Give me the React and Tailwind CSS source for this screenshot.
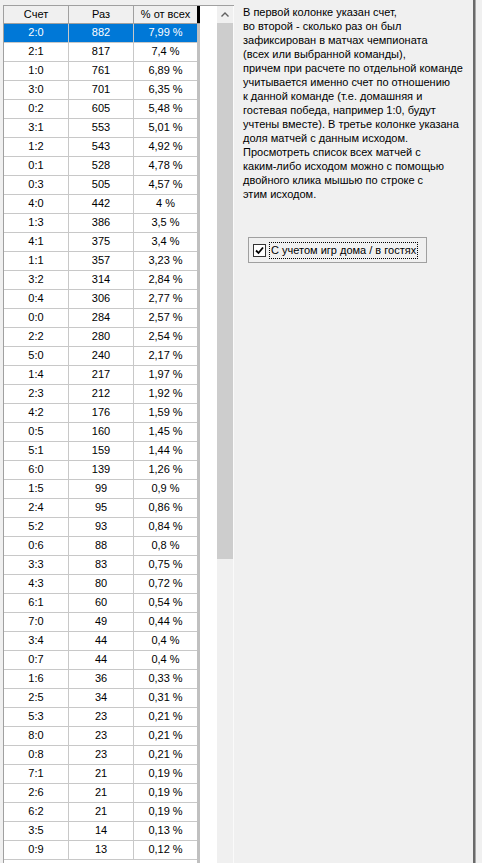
import React from "react";

const rows = [
  ["2:0", "882", "7,99 %"],
  ["2:1", "817", "7,4 %"],
  ["1:0", "761", "6,89 %"],
  ["3:0", "701", "6,35 %"],
  ["0:2", "605", "5,48 %"],
  ["3:1", "553", "5,01 %"],
  ["1:2", "543", "4,92 %"],
  ["0:1", "528", "4,78 %"],
  ["0:3", "505", "4,57 %"],
  ["4:0", "442", "4 %"],
  ["1:3", "386", "3,5 %"],
  ["4:1", "375", "3,4 %"],
  ["1:1", "357", "3,23 %"],
  ["3:2", "314", "2,84 %"],
  ["0:4", "306", "2,77 %"],
  ["0:0", "284", "2,57 %"],
  ["2:2", "280", "2,54 %"],
  ["5:0", "240", "2,17 %"],
  ["1:4", "217", "1,97 %"],
  ["2:3", "212", "1,92 %"],
  ["4:2", "176", "1,59 %"],
  ["0:5", "160", "1,45 %"],
  ["5:1", "159", "1,44 %"],
  ["6:0", "139", "1,26 %"],
  ["1:5", "99", "0,9 %"],
  ["2:4", "95", "0,86 %"],
  ["5:2", "93", "0,84 %"],
  ["0:6", "88", "0,8 %"],
  ["3:3", "83", "0,75 %"],
  ["4:3", "80", "0,72 %"],
  ["6:1", "60", "0,54 %"],
  ["7:0", "49", "0,44 %"],
  ["3:4", "44", "0,4 %"],
  ["0:7", "44", "0,4 %"],
  ["1:6", "36", "0,33 %"],
  ["2:5", "34", "0,31 %"],
  ["5:3", "23", "0,21 %"],
  ["8:0", "23", "0,21 %"],
  ["0:8", "23", "0,21 %"],
  ["7:1", "21", "0,19 %"],
  ["2:6", "21", "0,19 %"],
  ["6:2", "21", "0,19 %"],
  ["3:5", "14", "0,13 %"],
  ["0:9", "13", "0,12 %"],
];

const helpLines = [
  "В первой колонке указан счет,",
  "во второй - сколько раз он был",
  "зафиксирован в матчах чемпионата",
  "(всех или выбранной команды),",
  "причем при расчете по отдельной команде",
  "учитывается именно счет по отношению",
  "к данной команде (т.е. домашняя и",
  "гостевая победа, например 1:0, будут",
  "учтены вместе). В третье колонке указана",
  "доля матчей с данным исходом.",
  "Просмотреть список всех матчей с",
  "каким-либо исходом можно с помощью",
  "двойного клика мышью по строке с",
  "этим исходом.",
];

function ScoreRow({ row, selected }) {
  const base = selected ? "bg-[#0078d7] text-white" : "bg-white text-black";
  return (
    <div className={`flex h-[19px] border-b border-[#c8c8c8] ${base}`}>
      <div className="w-[65px] border-r border-[#c8c8c8] flex items-center justify-center">{row[0]}</div>
      <div className="w-[65px] border-r border-[#c8c8c8] flex items-center justify-center">{row[1]}</div>
      <div className="w-[63px] flex items-center justify-center">{row[2]}</div>
    </div>
  );
}

export default function App() {
  return (
    <div className="w-[482px] h-[863px] bg-[#f0f0f0] flex overflow-hidden font-['Liberation_Sans',Arial,sans-serif] text-[11px] text-black">
      {/* grid + scrollbar */}
      <div className="pl-[3px] pt-[5px] flex">
        <div className="flex border-l border-t border-[#a0a0a0] bg-white">
          <div className="flex flex-col w-[196px]">
            <div className="flex h-[19px] border-b border-[#a0a0a0] bg-[#f0f0f0]">
              <div className="w-[65px] border-r border-[#a0a0a0] flex items-center justify-center">Счет</div>
              <div className="w-[65px] border-r border-[#a0a0a0] flex items-center justify-center">Раз</div>
              <div className="w-[63px] flex items-center justify-center">% от всех</div>
              <div className="w-[3px] bg-black" />
            </div>
            <div className="flex">
              <div className="flex flex-col">
                {rows.map((r, i) => (
                  <ScoreRow key={r[0]} row={r} selected={i === 0} />
                ))}
                <div className="h-[19px] bg-white" />
              </div>
              <div className="w-[3px] bg-[#c0c0c0]" />
            </div>
          </div>
          <div className="w-[17px] bg-white" />
          <div className="w-[16px] bg-[#f0f0f0] flex flex-col">
            <div className="h-[17px] flex items-center justify-center">
              <svg width="8" height="5" viewBox="0 0 8 5">
                <polyline points="0.5,4.5 4,1 7.5,4.5" fill="none" stroke="#606060" strokeWidth="1.4" />
              </svg>
            </div>
            <div className="h-[536px] bg-[#cdcdcd]" />
          </div>
          <div className="w-[1px] bg-[#fafafa]" />
        </div>
      </div>

      {/* info panel */}
      <div className="w-[239px] pl-[9px] pt-[5px] flex flex-col">
        <div className="leading-[14px] whitespace-nowrap">
          {helpLines.map((l) => (
            <div key={l}>{l}</div>
          ))}
        </div>
        <div className="mt-[36px] ml-[5px] w-[179px] h-[26px] border border-[#a0a0a0] flex items-center pl-[4px]">
          <div className="w-[13px] h-[13px] border border-[#333] bg-white flex items-center justify-center">
            <svg width="9" height="9" viewBox="0 0 9 9">
              <polyline points="1,4.5 3.5,7 8,1.5" fill="none" stroke="#000" strokeWidth="1.8" />
            </svg>
          </div>
          <div className="ml-[3px] h-[17px] border border-dotted border-black px-[1px] flex items-center whitespace-nowrap">
            С учетом игр дома / в гостях
          </div>
        </div>
      </div>

      <div className="w-[3px] h-full border-l-2 border-[#6a6a6a] bg-[#a8a8a8]" />
    </div>
  );
}
